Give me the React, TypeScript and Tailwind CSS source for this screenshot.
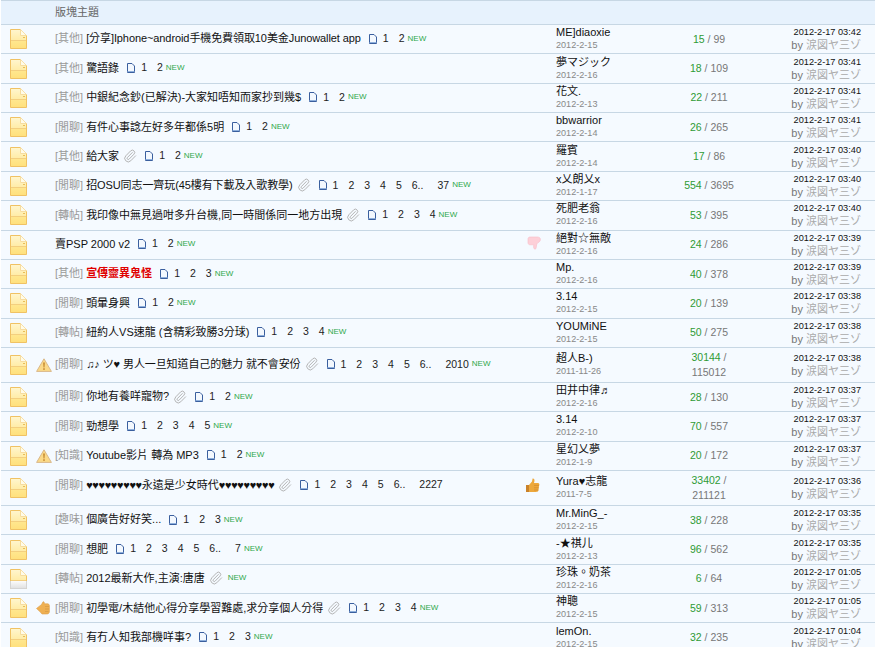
import type { ReactNode } from "react"
import { Paperclip } from "lucide-react"

type Row = {
  tag?: string
  title: ReactNode
  tight?: boolean
  red?: boolean
  clip?: boolean
  pages?: string[]
  isNew?: boolean
  mark?: "warn" | "hand"
  vote?: "up" | "down"
  grey?: boolean
  tall?: boolean
  author: string
  date: string
  replies: string
  views: string
  time: string
}

const p2 = ["1", "2"]
const p3 = ["1", "2", "3"]
const p4 = ["1", "2", "3", "4"]
const p5 = ["1", "2", "3", "4", "5"]
const long = (last: string) => ["1", "2", "3", "4", "5", "6..", last]

const hearts = <span className="tracking-[-0.35px]">♥♥♥♥♥♥♥♥♥</span>

const rows: Row[] = [
  { tag: "[其他]", title: "[分享]Iphone~android手機免費領取10美金Junowallet app", tight: true, pages: p2, isNew: true, author: "ME]diaoxie", date: "2012-2-15", replies: "15", views: "99", time: "03:42" },
  { tag: "[其他]", title: "驚語錄", pages: p2, isNew: true, author: "夢マジック", date: "2012-2-16", replies: "18", views: "109", time: "03:41" },
  { tag: "[其他]", title: "中銀紀念鈔(已解決)-大家知唔知而家抄到幾$", pages: p2, isNew: true, author: "花文.", date: "2012-2-13", replies: "22", views: "211", time: "03:41" },
  { tag: "[閒聊]", title: "有件心事諗左好多年都係5明", pages: p2, isNew: true, author: "bbwarrior", date: "2012-2-14", replies: "26", views: "265", time: "03:41" },
  { tag: "[其他]", title: "給大家", clip: true, pages: p2, isNew: true, author: "羅賓", date: "2012-2-14", replies: "17", views: "86", time: "03:40" },
  { tag: "[閒聊]", title: "招OSU同志一齊玩(45樓有下載及入歌教學)", tight: true, clip: true, pages: long("37"), isNew: true, author: "x乂朗乂x", date: "2012-1-17", replies: "554", views: "3695", time: "03:40" },
  { tag: "[轉帖]", title: "我印像中無見過咁多升台機,同一時間係同一地方出現", clip: true, pages: p4, isNew: true, author: "死肥老翁", date: "2012-2-16", replies: "53", views: "395", time: "03:40" },
  { title: "賣PSP 2000 v2", pages: p2, isNew: true, vote: "down", author: "絕對☆無敵", date: "2012-2-16", replies: "24", views: "286", time: "03:39" },
  { tag: "[其他]", title: "宣傳靈異鬼怪", red: true, pages: p3, isNew: true, author: "Mp.", date: "2012-2-16", replies: "40", views: "378", time: "03:39" },
  { tag: "[閒聊]", title: "頭暈身興", pages: p2, isNew: true, author: "3.14", date: "2012-2-15", replies: "20", views: "139", time: "03:38" },
  { tag: "[轉帖]", title: "紐約人VS速龍 (含精彩致勝3分球)", pages: p4, isNew: true, author: "YOUMiNE", date: "2012-2-15", replies: "50", views: "275", time: "03:38" },
  { tag: "[閒聊]", title: "♫♪ ツ♥ 男人一旦知道自己的魅力 就不會安份", tight: true, clip: true, pages: long("2010"), isNew: true, mark: "warn", tall: true, author: "超人B-)", date: "2011-11-26", replies: "30144", views: "115012", time: "03:38" },
  { tag: "[閒聊]", title: "你地有養咩寵物?", clip: true, pages: p2, isNew: true, author: "田井中律♬", date: "2012-2-16", replies: "28", views: "130", time: "03:37" },
  { tag: "[閒聊]", title: "勁想學", pages: p5, isNew: true, author: "3.14", date: "2012-2-10", replies: "70", views: "557", time: "03:37" },
  { tag: "[知識]", title: "Youtube影片 轉為 MP3", pages: p2, isNew: true, mark: "warn", author: "星幻乂夢", date: "2012-1-9", replies: "20", views: "172", time: "03:37" },
  { tag: "[閒聊]", title: <>{hearts}永遠是少女時代{hearts}</>, clip: true, pages: long("2227"), vote: "up", tall: true, author: "Yura♥志龍", date: "2011-7-5", replies: "33402", views: "211121", time: "03:36" },
  { tag: "[趣味]", title: "個廣告好好笑...", pages: p3, isNew: true, author: "Mr.MinG_-", date: "2012-2-15", replies: "38", views: "228", time: "03:35" },
  { tag: "[閒聊]", title: "想肥", pages: long("7"), isNew: true, author: "-★祺儿", date: "2012-2-13", replies: "96", views: "562", time: "03:35" },
  { tag: "[轉帖]", title: "2012最新大作,主演:唐唐", clip: true, isNew: true, grey: true, author: "珍珠。奶茶", date: "2012-2-16", replies: "6", views: "64", time: "01:05" },
  { tag: "[閒聊]", title: "初學電/木結他心得分享學習難處,求分享個人分得", clip: true, pages: p4, isNew: true, mark: "hand", author: "神聰", date: "2012-2-15", replies: "59", views: "313", time: "01:05" },
  { tag: "[知識]", title: "有冇人知我部機咩事?", pages: p3, isNew: true, author: "lemOn.", date: "2012-2-15", replies: "32", views: "235", time: "01:04" },
]

function Folder({ grey }: { grey?: boolean }) {
  const id = grey ? "fg" : "fy"
  return (
    <svg width="17" height="20" viewBox="0 0 17 20" className="shrink-0">
      <defs>
        <linearGradient id={id} x1="0" y1="0" x2="0" y2="1">
          <stop offset="0" stopColor="#fff6cf" />
          <stop offset="0.58" stopColor="#ffeca6" />
          <stop offset="0.59" stopColor={grey ? "#fcfcfc" : "#ffe78f"} />
          <stop offset="1" stopColor={grey ? "#e0e0e0" : "#ffe07c"} />
        </linearGradient>
      </defs>
      <path d="M0.5 0.5H10.5L16.5 6.5V19.5H0.5Z" fill={`url(#${id})`} stroke="#f0c264" />
      <path d="M10.5 0.5V6.5H16.5" fill="#fffbe8" stroke="#f6dca0" />
      <path d="M1 11.5H16" stroke="#f3cf80" />
      {grey && <path d="M0.5 12V19.5H16.5V12" fill="none" stroke="#d4d4d4" />}
      {!grey && <rect x="13" y="8" width="2" height="1" fill="#e8bc58" />}
    </svg>
  )
}

function Warn() {
  return (
    <svg width="16" height="14" viewBox="0 0 16 14">
      <path d="M8 0.8L15.4 13.4H0.6Z" fill="#fbd987" stroke="#d9b88a" strokeLinejoin="round" />
      <path d="M7.3 4.5H8.7L8.4 9.5H7.6Z" fill="#b9781e" />
      <rect x="7.3" y="10.3" width="1.4" height="1.5" fill="#b9781e" />
    </svg>
  )
}

function Hand() {
  return (
    <svg width="14" height="14" viewBox="0 0 14 14">
      <path d="M0.5 7.5L5.5 3.5L7 0.8C8 0.5 8.5 1.5 8.4 2.8H12C13.3 3.2 13.6 4.5 13.4 6V11C13 12.8 11.8 13 10.5 13H6L3.8 10.5Z" fill="#efb052" stroke="#dca04c" strokeWidth="0.6" />
      <path d="M9 5.5H13M9 8H13M9 10.5H12.5" stroke="#cf9440" strokeWidth="0.6" />
    </svg>
  )
}

function ThumbUp() {
  return (
    <svg width="15" height="15" viewBox="0 0 15 15" className="-ml-[1px] mb-[6px]">
      <path d="M1 7H4V14H1Z" fill="#c9822a" />
      <path d="M4 7L7 3.5L7.6 0.6C9 0.3 9.8 1.6 9.4 3.2L9 5H13.2C14.6 5.4 14.6 7 14 8L13.4 12.6C13 13.8 12 14 11 14H4Z" fill="#eda83c" />
      <path d="M9 7.4H14M9 9.8H13.8M9 12H13.4" stroke="#c9822a" strokeWidth="0.6" />
    </svg>
  )
}

function ThumbDown() {
  return (
    <svg width="14" height="14" viewBox="0 0 14 14" className="mb-[4px] ml-[1px]">
      <path d="M1 3C1 1.6 2 1 3.2 1H10.5C12.4 1 13.4 2 13.4 3.4C13.4 5 12.4 6 11 6.6L9.8 8L9 12.6C8 13.6 6.6 12.8 6.6 11.4L6.8 8.8H3C1.6 8.8 1 7.8 1 6.6Z" fill="#fdd0d8" stroke="#f9bcc8" strokeWidth="0.6" />
    </svg>
  )
}

function PageIcon() {
  return (
    <svg width="8" height="10" viewBox="0 0 8 10" className="shrink-0">
      <path d="M0.5 0.5H5L7.5 3V9.5H0.5Z" fill="#f3f8fe" stroke="#3a5f9e" />
      <path d="M0.5 8.5H7.5" stroke="#8fb0dc" />
    </svg>
  )
}

function ThreadRow({ row }: { row: Row }) {
  return (
    <div className={`flex items-center border-t border-[#c7d7e4] bg-[#f5faff] ${row.tall ? "h-[35px]" : "h-[29.36px]"}`}>
      <div className="flex w-[35px] shrink-0 pl-[9px]">
        <Folder grey={row.grey} />
      </div>
      <div className="flex w-[19px] shrink-0 items-center">
        {row.mark === "warn" && <Warn />}
        {row.mark === "hand" && <Hand />}
      </div>
      <div className={`flex w-[471px] shrink-0 items-center whitespace-nowrap text-[11px] text-[#111] ${row.clip && row.vote ? "pb-[6px]" : "pb-px"}`}>
        {row.tag && <span className="mr-[3px] text-[#999]">{row.tag}</span>}
        <span className={`${row.red ? "font-bold text-[#e00000]" : ""} ${row.tight ? "tracking-[-0.09px]" : ""}`}>{row.title}</span>
        {row.clip && <Paperclip size={14} strokeWidth={1.5} className="ml-[4px] text-[#aaa]" />}
        {row.pages && (
          <span className="ml-[8px] flex items-center">
            <PageIcon />
            <span className="flex items-center pl-[1px] text-[10.5px] text-[#222]">
              {row.pages.map((p) => (
                <span key={p} className={p === "6.." ? "pl-[5px] pr-[9px]" : "px-[5px]"}>{p}</span>
              ))}
            </span>
          </span>
        )}
        {row.isNew && <span className={`text-[8px] text-[#2ea84a] ${row.pages ? "-ml-[2px]" : "ml-[5px]"}`}>NEW</span>}
      </div>
      <div className="flex w-[30px] shrink-0 items-center">
        {row.vote === "up" && <ThumbUp />}
        {row.vote === "down" && <ThumbDown />}
      </div>
      <div className="w-[127px] shrink-0 whitespace-nowrap">
        <div className="text-[11px] leading-[13px] text-[#111]">{row.author}</div>
        <div className="text-[9.1px] leading-[13px] text-[#888]">{row.date}</div>
      </div>
      <div className="w-[52px] shrink-0 text-center text-[10.5px] leading-[15px] text-[#777]">
        <span className="text-[#2f9a35]">{row.replies}</span> / {row.views}
      </div>
      <div className="w-[126px] shrink-0 whitespace-nowrap text-right">
        <div className="text-[9.2px] leading-[13px] text-[#111]">2012-2-17 {row.time}</div>
        <div className="text-[11px] leading-[13px] text-[#777]">
          by <span className="text-[#aaa]">涙図ヤ三ゾ</span>
        </div>
      </div>
    </div>
  )
}

export default function App() {
  return (
    <div className="h-screen overflow-hidden bg-white pl-px pr-[3px] font-['Liberation_Sans','Noto_Sans_CJK_TC',sans-serif]">
      <div className="flex h-[24px] items-center border-t border-[#c7d7e4] bg-[#e7f2fd] pl-[54px] text-[11px] text-[#666]">
        版塊主題
      </div>
      {rows.map((row, i) => (
        <ThreadRow key={i} row={row} />
      ))}
    </div>
  )
}
